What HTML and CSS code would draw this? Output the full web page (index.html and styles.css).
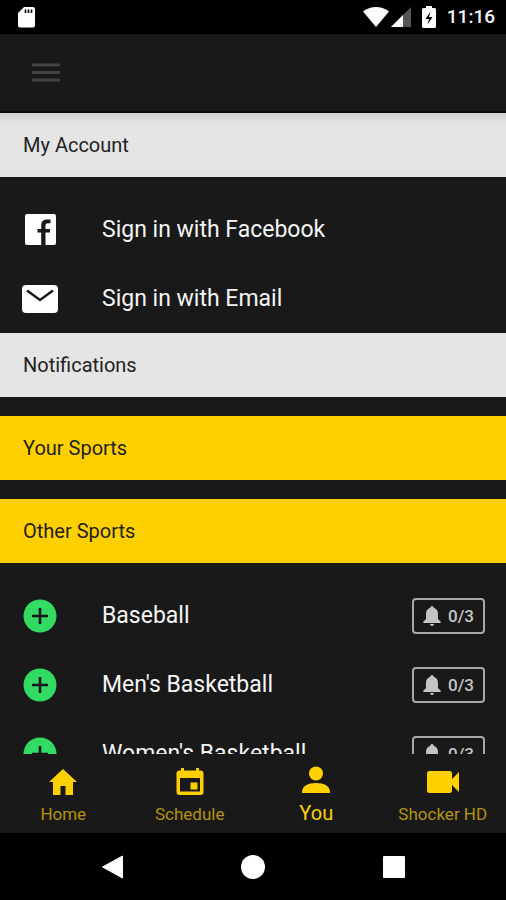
FILE: index.html
```html
<!DOCTYPE html>
<html lang="en">
<head>
<meta charset="utf-8">
<meta name="viewport" content="width=device-width, initial-scale=1">
<title>You</title>
<link rel="stylesheet" href="styles.css">
</head>
<body>
<svg class="defs" aria-hidden="true">
  <symbol id="add" viewBox="0 0 34 34"><circle cx="17" cy="17" r="16.5" fill="#32db64"/><path d="M17 9v16M9 17h16" stroke="#151515" stroke-width="2.6"/></symbol>
  <symbol id="bell" viewBox="0 0 18 20"><path d="M9 0a1.7 1.7 0 0 1 1.7 1.8C13.600 2.600 15 5 15 8v5l2.700 2.700V17H.3v-1.300L3 13V8c0-3 1.400-5.400 4.300-6.200A1.700 1.700 0 0 1 9 0zM7 18h4a2 2 0 0 1-4 0z"/></symbol>
</svg>

<div class="status-bar">
  <svg class="sd-icon" viewBox="0 0 17 21"><path d="M6 0h9a2 2 0 0 1 2 2v16.500a2 2 0 0 1-2 2H2a2 2 0 0 1-2-2V6z" fill="#fff"/><path d="M7.500 2.500v3.500M10.500 2.500v3.500M13.500 2.500v3.500" stroke="#000" stroke-width="1.600"/></svg>
  <div class="status-icons">
    <svg class="wifi-icon" viewBox="0 0 26 20"><path d="M0 4.500C7-1.500 19-1.500 26 4.500L13 20z" fill="#fff"/></svg>
    <svg class="signal-icon" viewBox="0 0 20 20"><path d="M20 0v20H0z" fill="#555"/><path d="M12 8v12H0z" fill="#fff"/></svg>
    <svg class="battery-icon" viewBox="0 0 14 22"><path d="M4 0h6v2h2.500A1.500 1.500 0 0 1 14 3.500v17a1.500 1.500 0 0 1-1.500 1.500h-11A1.500 1.500 0 0 1 0 20.500v-17A1.500 1.500 0 0 1 1.500 2H4z" fill="#fff"/><path d="M8.500 5.500 3.500 13H7l-1.500 5.500 5-7.500H7z" fill="#000"/></svg>
    <span class="clock">11:16</span>
  </div>
</div>

<header class="app-bar">
  <button class="menu-button" aria-label="Menu"><svg viewBox="0 0 28 20"><path d="M0 2h28M0 9.500h28M0 17h28" stroke="#434343" stroke-width="3"/></svg></button>
</header>

<main class="content">
  <h2 class="section-title shaded">My Account</h2>
  <div class="rows">
    <button class="row">
      <span class="row-icon"><svg class="facebook-icon" viewBox="0 0 31 31"><path fill="#fff" fill-rule="evenodd" d="M2 0h27a2 2 0 0 1 2 2v27a2 2 0 0 1-2 2h-8.500V18.500h4.500v-3.500h-4.500v-3c0-2 .8-2.700 2.500-2.700h2.500V5.500h-3.500c-4 0-5.800 2.300-5.800 6v3.500h-3.700v3.500h3.700V31H2a2 2 0 0 1-2-2V2a2 2 0 0 1 2-2z"/></svg></span>
      <span>Sign in with Facebook</span>
    </button>
    <button class="row">
      <span class="row-icon"><svg class="mail-icon" viewBox="0 0 36 28"><rect width="36" height="28" rx="4" fill="#fff"/><path d="m5 5.500 13 9.500 13-9.500" fill="none" stroke="#191919" stroke-width="2.400"/></svg></span>
      <span>Sign in with Email</span>
    </button>
  </div>
  <h2 class="section-title">Notifications</h2>
  <h2 class="section-title sport">Your Sports</h2>
  <h2 class="section-title sport">Other Sports</h2>
  <div class="rows">
    <div class="row">
      <button class="row-icon" aria-label="Add Baseball"><svg class="add-icon"><use href="#add"/></svg></button>
      <span>Baseball</span>
      <button class="alerts"><svg class="bell-icon"><use href="#bell"/></svg>0/3</button>
    </div>
    <div class="row">
      <button class="row-icon" aria-label="Add Men's Basketball"><svg class="add-icon"><use href="#add"/></svg></button>
      <span>Men's Basketball</span>
      <button class="alerts"><svg class="bell-icon"><use href="#bell"/></svg>0/3</button>
    </div>
    <div class="row">
      <button class="row-icon" aria-label="Add Women's Basketball"><svg class="add-icon"><use href="#add"/></svg></button>
      <span>Women's Basketball</span>
      <button class="alerts"><svg class="bell-icon"><use href="#bell"/></svg>0/3</button>
    </div>
  </div>
</main>

<nav class="tabs">
  <a class="tab" href="#home"><svg viewBox="0 0 32 32"><path d="M16 3 2 16h4v13h7.500v-9h5v9H26V16h4z"/></svg>Home</a>
  <a class="tab" href="#schedule"><svg viewBox="0 0 32 32"><path fill-rule="evenodd" d="M7 2h3v2.500h12V2h3v2.500h1.500a3 3 0 0 1 3 3V26a3 3 0 0 1-3 3h-21a3 3 0 0 1-3-3V7.500a3 3 0 0 1 3-3H7zM6 12v13.500h20V12z"/><path d="M16.500 16.500h7v7h-7z"/></svg>Schedule</a>
  <a class="tab active" href="#you" aria-current="page"><svg viewBox="0 0 32 32"><circle cx="16" cy="8.500" r="7"/><path d="M2 28v-1c0-6 6-9 14-9s14 3 14 9v1z"/></svg>You</a>
  <a class="tab" href="#shocker"><svg viewBox="0 0 32 32"><path d="M2.500 5h20A2.500 2.500 0 0 1 25 7.500V13l7-7v20l-7-7v5.500a2.500 2.500 0 0 1-2.500 2.500h-20A2.500 2.500 0 0 1 0 24.500v-17A2.500 2.500 0 0 1 2.500 5z"/></svg>Shocker HD</a>
</nav>

<div class="system-bar">
  <button aria-label="Back"><svg viewBox="0 0 24 24"><path d="M22.500 1v22L2.500 12z" fill="#fff" stroke="#fff" stroke-linejoin="round"/></svg></button>
  <button aria-label="Home screen"><svg viewBox="0 0 24 24"><circle cx="12" cy="12" r="12" fill="#fff"/></svg></button>
  <button aria-label="Recent apps"><svg viewBox="0 0 24 24"><rect x="1" y="1" width="22" height="22" rx="1" fill="#fff"/></svg></button>
</div>
</body>
</html>
```
FILE: styles.css
```css
* {
  box-sizing: border-box;
}

body {
  margin: 0;
  height: 100vh;
  display: flex;
  flex-direction: column;
  background: #191919;
  color: #f4f4f4;
  font-family: Roboto, "Liberation Sans", sans-serif;
}

button {
  padding: 0;
  border: 0;
  background: none;
  color: inherit;
  font: inherit;
}

svg {
  display: block;
}

.defs {
  position: absolute;
  width: 0;
  height: 0;
}

.status-bar {
  flex: none;
  height: 34px;
  padding: 0 11px 0 18px;
  display: flex;
  align-items: center;
  justify-content: space-between;
  background: #000;
}

.sd-icon {
  width: 17px;
  height: 21px;
}

.status-icons {
  display: flex;
  align-items: center;
}

.wifi-icon {
  width: 26px;
  height: 20px;
  margin-right: 2px;
}

.signal-icon {
  width: 20px;
  height: 20px;
  margin-right: 11px;
}

.battery-icon {
  width: 14px;
  height: 22px;
  margin-right: 11px;
}

.clock {
  font-size: 19px;
  font-weight: 500;
  line-height: 36px;
}

.app-bar {
  flex: none;
  height: 79px;
  padding: 0 32px;
  display: flex;
  align-items: center;
  border-bottom: 2px solid #0c0c0c;
}

.menu-button svg {
  width: 28px;
  height: 20px;
}

.content {
  flex: 1;
  min-height: 0;
  overflow: hidden;
}

.section-title {
  margin: 0;
  padding: 0 23px;
  background: #e5e5e5;
  color: #222;
  font-size: 20px;
  font-weight: 400;
  line-height: 64px;
}

.shaded {
  background: linear-gradient(#cfcfcf, #e5e5e5 10px);
}

.sport {
  margin-top: 19px;
  background: #ffd000;
}

.rows {
  padding-top: 18px;
}

.row {
  width: 100%;
  height: 69px;
  padding: 0 21px 0 22px;
  display: flex;
  align-items: center;
  gap: 44px;
  font-size: 23px;
  text-align: left;
}

.row-icon {
  width: 36px;
  flex: none;
  display: flex;
  justify-content: center;
}

.facebook-icon {
  width: 31px;
  height: 31px;
}

.mail-icon {
  width: 36px;
  height: 28px;
}

.add-icon {
  width: 34px;
  height: 34px;
}

.alerts {
  width: 73px;
  height: 36px;
  margin-left: auto;
  display: flex;
  align-items: center;
  justify-content: center;
  gap: 7px;
  border: 2px solid #a8a8a8;
  border-radius: 4px;
  color: #c4c4c4;
  font-size: 17px;
  font-weight: 500;
}

.bell-icon {
  width: 18px;
  height: 20px;
  fill: #c4c4c4;
}

.tabs {
  flex: none;
  height: 79px;
  display: grid;
  grid-template-columns: repeat(4, 1fr);
}

.tab {
  padding-top: 12px;
  display: flex;
  flex-direction: column;
  align-items: center;
  gap: 4px;
  color: #b3930f;
  font-size: 17px;
  line-height: 24px;
  text-decoration: none;
}

.tab svg {
  width: 32px;
  height: 32px;
  fill: #ffd000;
}

.active {
  padding-top: 11px;
  color: #ffd000;
  font-size: 20px;
}

.system-bar {
  flex: none;
  height: 67px;
  display: flex;
  align-items: center;
  justify-content: center;
  gap: 117px;
  background: #000;
}

.system-bar svg {
  width: 24px;
  height: 24px;
}
```
